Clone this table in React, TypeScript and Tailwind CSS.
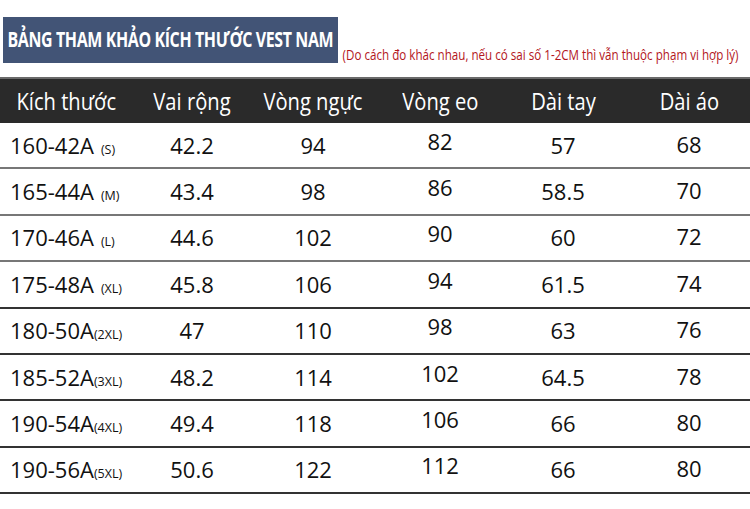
const rows = [
  ['160-42A', '(S)', '42.2', '94', '82', '57', '68'],
  ['165-44A', '(M)', '43.4', '98', '86', '58.5', '70'],
  ['170-46A', '(L)', '44.6', '102', '90', '60', '72'],
  ['175-48A', '(XL)', '45.8', '106', '94', '61.5', '74'],
  ['180-50A', '(2XL)', '47', '110', '98', '63', '76'],
  ['185-52A', '(3XL)', '48.2', '114', '102', '64.5', '78'],
  ['190-54A', '(4XL)', '49.4', '118', '106', '66', '80'],
  ['190-56A', '(5XL)', '50.6', '122', '112', '66', '80'],
];

const headers = ['Kích thước', 'Vai rộng', 'Vòng ngực', 'Vòng eo', 'Dài tay', 'Dài áo'];

const cols = 'grid grid-cols-[140px_104px_138px_116px_130px_122px]';

export default function App() {
  return (
    <div className="w-[750px] h-[509px] bg-white overflow-hidden font-['Open_Sans',sans-serif] text-[#111]">
      {/* title row */}
      <div className="flex items-end h-[77px] pb-[14px] pl-[3px]">
        <div className="w-[335px] h-[46px] bg-[#425476] flex items-center justify-center overflow-hidden">
          <span className="inline-block whitespace-nowrap text-white font-bold text-[21px] tracking-[-0.5px] scale-x-[0.76]">
            BẢNG THAM KHẢO KÍCH THƯỚC VEST NAM
          </span>
        </div>
        <div className="w-[400px] ml-[2px] mb-[-2px] flex justify-center overflow-visible">
          <span className="inline-block whitespace-nowrap text-[#b3161c] text-[14px] scale-x-[0.83]">
            (Do cách đo khác nhau, nếu có sai số 1-2CM thì vẫn thuộc phạm vi hợp lý)
          </span>
        </div>
      </div>

      {/* header bar */}
      <div className={`${cols} h-[46px] bg-[#2a2a2a] border-t-2 border-[#6a6a6a] text-white items-center`}>
        {headers.map((h, i) => (
          <div key={h} className={i === 0 ? 'pl-[7px]' : 'flex justify-center'}>
            <span className="inline-block whitespace-nowrap text-[24px] scale-x-[0.84]">{h}</span>
          </div>
        ))}
      </div>

      {/* data rows */}
      {rows.map((r, idx) => (
        <div
          key={idx}
          className={`${cols} h-[46.4px] items-center border-b-2 ${idx < 3 ? 'border-[#777]' : 'border-[#333]'} text-[22px]`}
        >
          <div className="pl-[10px] flex items-baseline whitespace-nowrap">
            <span>{r[0]}</span>
            <span className={`text-[12.5px] ${r[1].length > 4 ? 'ml-0' : 'ml-[7px]'}`}>{r[1]}</span>
          </div>
          <div className="text-center">{r[2]}</div>
          <div className="text-center">{r[3]}</div>
          <div className="text-center -translate-y-[4px]">{r[4]}</div>
          <div className="text-center">{r[5]}</div>
          <div className="text-center -translate-y-[1px]">{r[6]}</div>
        </div>
      ))}
    </div>
  );
}
